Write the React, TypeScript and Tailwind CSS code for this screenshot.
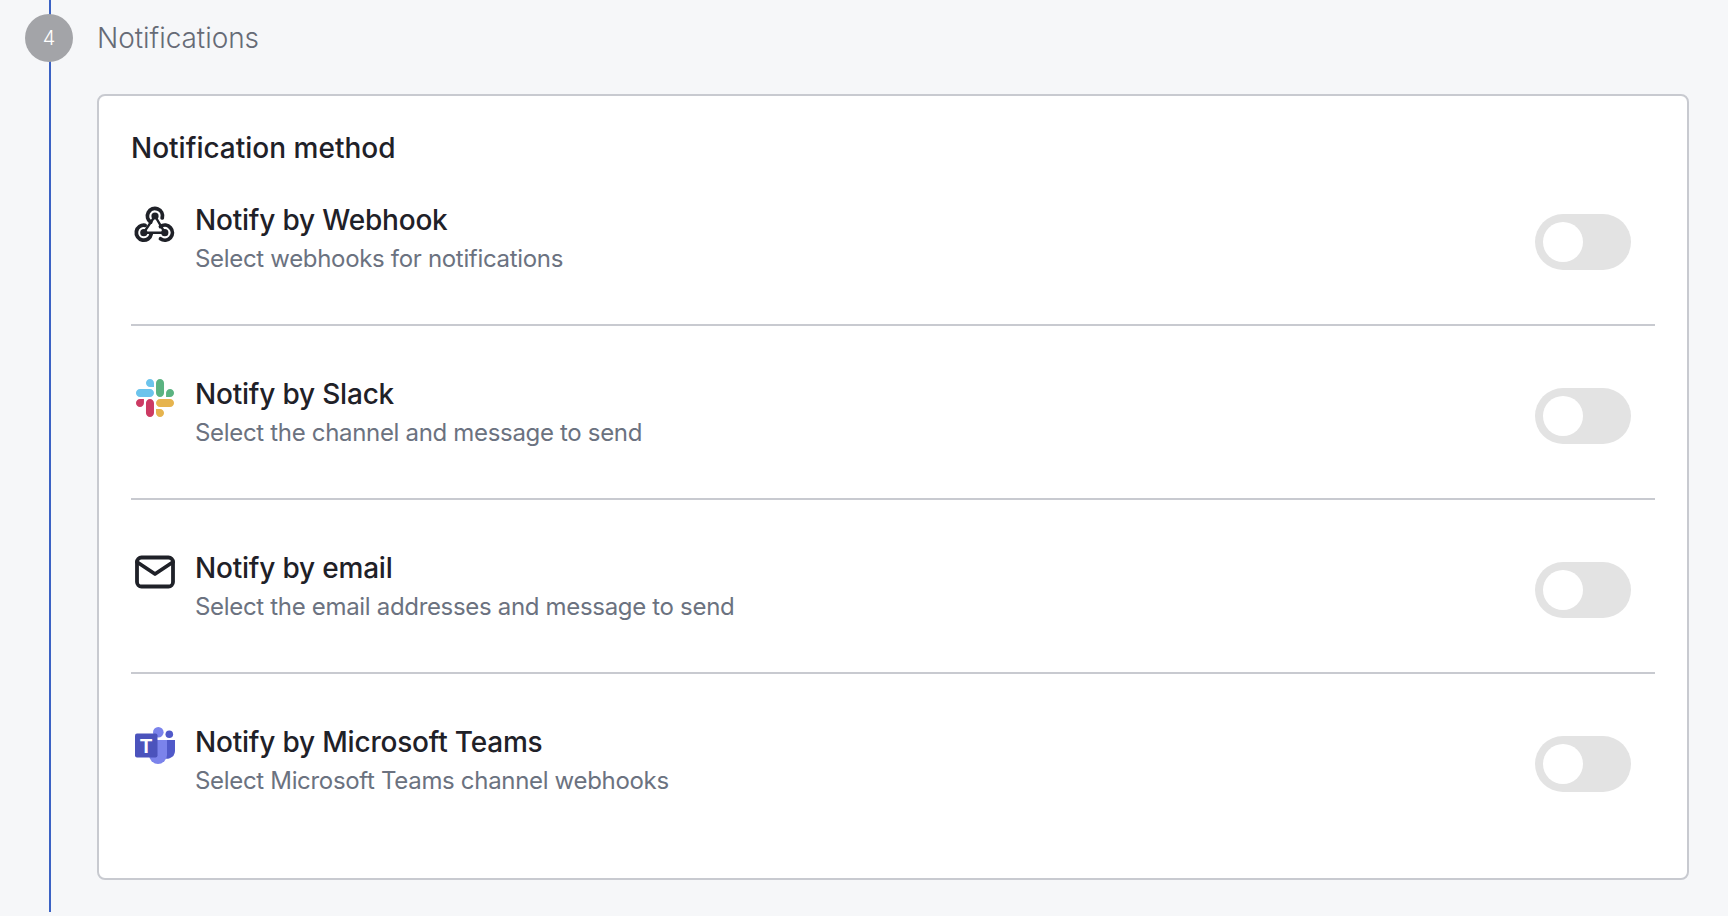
import React from "react";

const font = { fontFamily: '"Inter", "Noto Sans", sans-serif' };

function WebhookIcon() {
  return (
    <svg width="48" height="48" viewBox="0 0 48 48" fill="none" stroke="#1f2128" strokeWidth="3.8" strokeLinecap="round">
      <path d="M19.7 22.1A7.5 7.5 0 1 1 31.2 17.9" />
      <path d="M14.1 25.3A7.5 7.5 0 1 0 20.2 34" />
      <path d="M29.5 26.6A7.5 7.5 0 1 1 29.5 38.8" />
      <path d="M24 16L12.8 32.7H33.8Z" strokeWidth="2.4" strokeLinejoin="round" />
      <circle cx="24" cy="16" r="3.6" fill="#1f2128" stroke="none" />
      <circle cx="12.8" cy="32.7" r="3.6" fill="#1f2128" stroke="none" />
      <circle cx="33.8" cy="32.7" r="3.6" fill="#1f2128" stroke="none" />
    </svg>
  );
}

function SlackIcon() {
  return (
    <svg width="48" height="48" viewBox="-16 -16 154.8 154.8">
      <path fill="#cc3a63" d="M25.8 77.6c0 7.1-5.8 12.9-12.9 12.9S0 84.7 0 77.6s5.8-12.9 12.9-12.9h12.9v12.9z" />
      <path fill="#cc3a63" d="M32.3 77.6c0-7.1 5.8-12.9 12.9-12.9s12.9 5.8 12.9 12.9v32.3c0 7.1-5.8 12.9-12.9 12.9s-12.9-5.8-12.9-12.9V77.6z" />
      <path fill="#6cc4ec" d="M45.2 25.8c-7.1 0-12.9-5.8-12.9-12.9S38.1 0 45.2 0s12.9 5.8 12.9 12.9v12.9H45.2z" />
      <path fill="#6cc4ec" d="M45.2 32.3c7.1 0 12.9 5.8 12.9 12.9s-5.8 12.9-12.9 12.9H12.9C5.8 58.1 0 52.3 0 45.2s5.8-12.9 12.9-12.9h32.3z" />
      <path fill="#5bb381" d="M97 45.2c0-7.1 5.8-12.9 12.9-12.9s12.9 5.8 12.9 12.9-5.8 12.9-12.9 12.9H97V45.2z" />
      <path fill="#5bb381" d="M90.5 45.2c0 7.1-5.8 12.9-12.9 12.9s-12.9-5.8-12.9-12.9V12.9C64.7 5.8 70.5 0 77.6 0s12.9 5.8 12.9 12.9v32.3z" />
      <path fill="#e6b44e" d="M77.6 97c7.1 0 12.9 5.8 12.9 12.9s-5.8 12.9-12.9 12.9-12.9-5.8-12.9-12.9V97h12.9z" />
      <path fill="#e6b44e" d="M77.6 90.5c-7.1 0-12.9-5.8-12.9-12.9s5.8-12.9 12.9-12.9h32.3c7.1 0 12.9 5.8 12.9 12.9s-5.8 12.9-12.9 12.9H77.6z" />
    </svg>
  );
}

function MailIcon() {
  return (
    <svg width="48" height="48" viewBox="0 0 48 48" fill="none" stroke="#1f2128" strokeWidth="3.8" strokeLinejoin="round" strokeLinecap="round">
      <rect x="6" y="9.5" width="36" height="29" rx="4.5" />
      <path d="M6 14L24 26L42 14" />
    </svg>
  );
}

function TeamsIcon() {
  return (
    <svg width="48" height="48" viewBox="0 0 48 48">
      <circle cx="38.3" cy="12.3" r="3.8" fill="#5059c9" />
      <path fill="#5059c9" d="M30 18H44V29A8 8 0 0 1 30 34Z" />
      <circle cx="27.3" cy="10.3" r="5.3" fill="#7b83eb" />
      <path fill="#7b83eb" d="M18 18H36V33A9 9 0 0 1 18 33Z" />
      <rect x="4" y="11.5" width="22.5" height="24" rx="2" fill="#4b53bc" />
      <text x="15.2" y="30.7" textAnchor="middle" fontSize="20" fontWeight="700" fill="#ffffff" fontFamily="Liberation Sans, sans-serif">T</text>
    </svg>
  );
}

const rows = [
  { title: "Notify by Webhook", sub: "Select webhooks for notifications", icon: <WebhookIcon /> },
  { title: "Notify by Slack", sub: "Select the channel and message to send", icon: <SlackIcon /> },
  { title: "Notify by email", sub: "Select the email addresses and message to send", icon: <MailIcon /> },
  { title: "Notify by Microsoft Teams", sub: "Select Microsoft Teams channel webhooks", icon: <TeamsIcon /> },
];

function Toggle() {
  return (
    <div className="mt-[14px] mr-6 flex h-14 w-24 shrink-0 items-center rounded-full bg-[#e3e3e3] pl-2">
      <div className="h-10 w-10 rounded-full bg-white" />
    </div>
  );
}

export default function App() {
  return (
    <div className="h-[916px] w-[1728px] overflow-hidden bg-[#f6f7f9]" style={font}>
      <div className="relative ml-[49px] h-[912px] border-l-2 border-[#3b62c4] pl-[46px] pr-[39px]">
        <div className="absolute left-[-26px] top-[14px] flex h-12 w-12 items-center justify-center rounded-full bg-[#a3a4a8] text-[20px] font-light text-white">
          4
        </div>
        <div className="flex h-[76px] items-center text-[28px] font-light leading-9 tracking-[-0.05px] text-[#666b76]">Notifications</div>
        <div className="mt-[18px] h-[786px] rounded-lg border-2 border-[#c8cad0] bg-white px-8 pb-8 pt-[34px]">
          <div className="mb-[34px] text-[28px] font-medium leading-9 text-[#1f2128]">Notification method</div>
          {rows.map((r, i) => (
            <div key={r.title} className={i === 0 ? "flex pb-[49px]" : "flex border-t-2 border-[#c8cad0] pb-[49px] pt-[48px]"}>
              <div className="h-12 w-12 shrink-0">{r.icon}</div>
              <div className="ml-4 flex-1 pt-0.5">
                <div className="text-[28px] font-medium leading-9 tracking-[-0.2px] text-[#1f2128]">{r.title}</div>
                <div className="mt-[5px] text-[24px] leading-8 tracking-[-0.32px] text-[#6b7280]">{r.sub}</div>
              </div>
              <Toggle />
            </div>
          ))}
        </div>
      </div>
    </div>
  );
}
